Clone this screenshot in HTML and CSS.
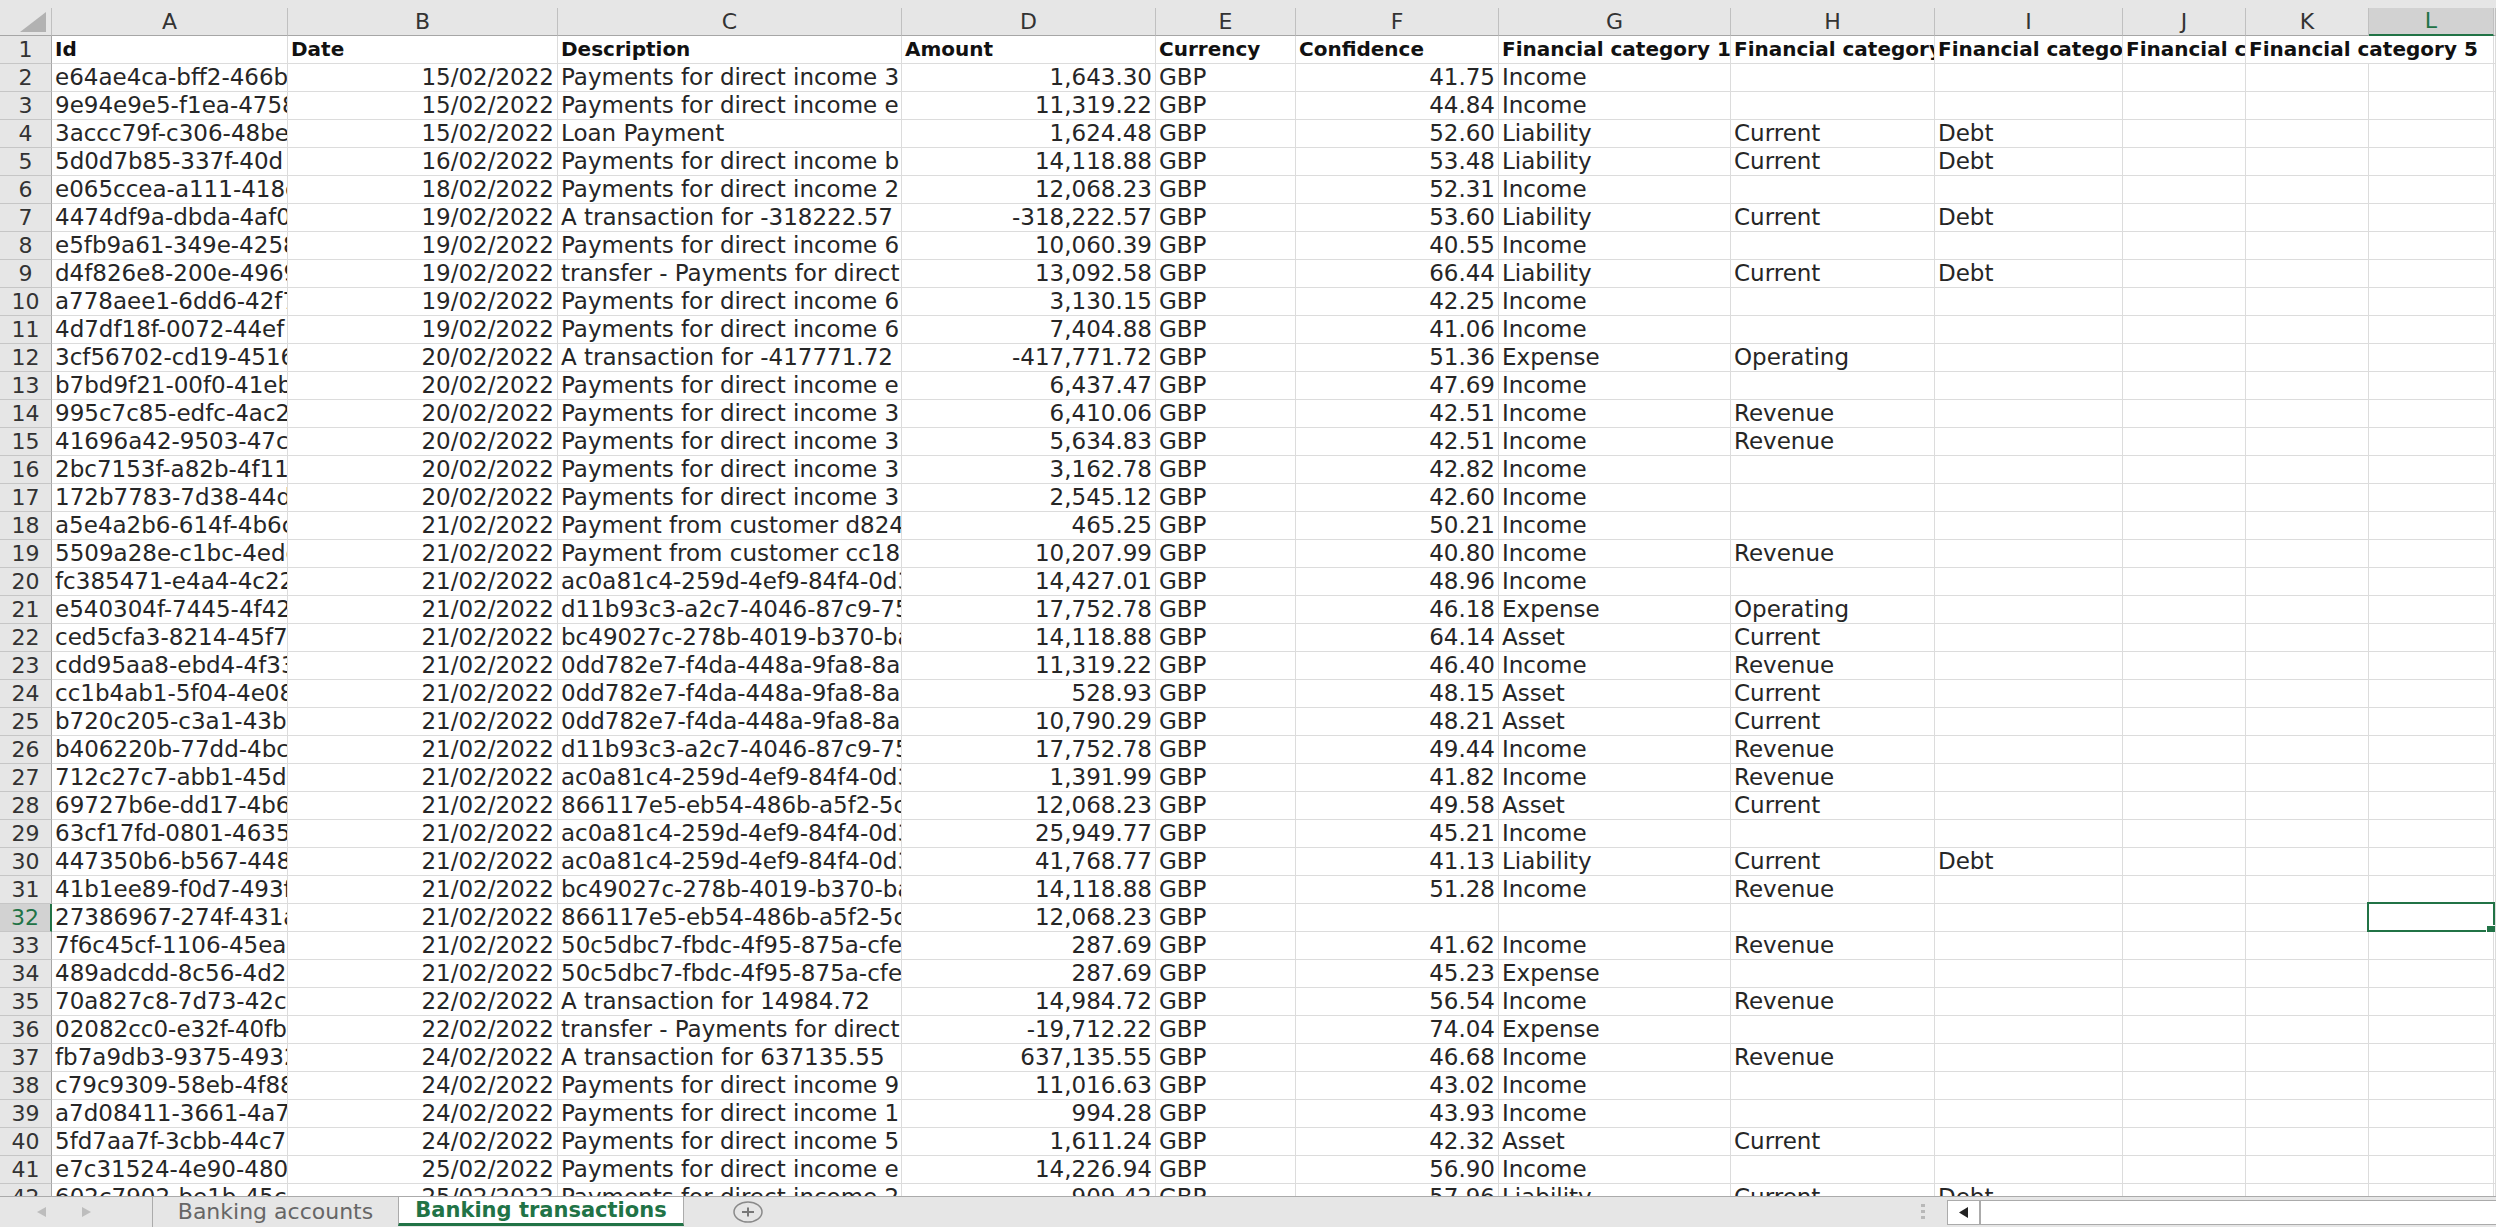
FILE: index.html
```html
<!DOCTYPE html>
<html lang="en">
<head>
<meta charset="utf-8">
<title>Banking transactions</title>
<link rel="stylesheet" href="styles.css">
</head>
<body>
<main class="sheet">
<table class="grid">
<colgroup><col class="w-head"><col class="w-a"><col class="w-b"><col class="w-c"><col class="w-d"><col class="w-e"><col class="w-f"><col class="w-g"><col class="w-h"><col class="w-i"><col class="w-j"><col class="w-k"><col class="w-l"><col></colgroup>
<thead>
<tr><th class="corner"><svg class="corner-mark" viewBox="0 0 26 20" aria-hidden="true"><path d="M26 0V20H0Z" fill="#b2b2b2"/></svg></th><th scope="col">A</th><th scope="col">B</th><th scope="col">C</th><th scope="col">D</th><th scope="col">E</th><th scope="col">F</th><th scope="col">G</th><th scope="col">H</th><th scope="col">I</th><th scope="col">J</th><th scope="col">K</th><th scope="col" class="current">L</th><th></th></tr>
</thead>
<tbody>
<tr class="titles"><th scope="row">1</th><td>Id</td><td>Date</td><td>Description</td><td>Amount</td><td>Currency</td><td>Confidence</td><td>Financial category 1</td><td>Financial category 2</td><td>Financial category 3</td><td>Financial category 4</td><td colspan="2">Financial category 5</td><td></td></tr>
<tr><th scope="row">2</th><td>e64ae4ca-bff2-466b</td><td>15/02/2022</td><td>Payments for direct income 3</td><td>1,643.30</td><td>GBP</td><td>41.75</td><td>Income</td><td></td><td></td><td></td><td></td><td></td><td></td></tr>
<tr><th scope="row">3</th><td>9e94e9e5-f1ea-4758</td><td>15/02/2022</td><td>Payments for direct income e</td><td>11,319.22</td><td>GBP</td><td>44.84</td><td>Income</td><td></td><td></td><td></td><td></td><td></td><td></td></tr>
<tr><th scope="row">4</th><td>3accc79f-c306-48be-</td><td>15/02/2022</td><td>Loan Payment</td><td>1,624.48</td><td>GBP</td><td>52.60</td><td>Liability</td><td>Current</td><td>Debt</td><td></td><td></td><td></td><td></td></tr>
<tr><th scope="row">5</th><td>5d0d7b85-337f-40d</td><td>16/02/2022</td><td>Payments for direct income b</td><td>14,118.88</td><td>GBP</td><td>53.48</td><td>Liability</td><td>Current</td><td>Debt</td><td></td><td></td><td></td><td></td></tr>
<tr><th scope="row">6</th><td>e065ccea-a111-418c</td><td>18/02/2022</td><td>Payments for direct income 2</td><td>12,068.23</td><td>GBP</td><td>52.31</td><td>Income</td><td></td><td></td><td></td><td></td><td></td><td></td></tr>
<tr><th scope="row">7</th><td>4474df9a-dbda-4af0</td><td>19/02/2022</td><td>A transaction for -318222.57</td><td>-318,222.57</td><td>GBP</td><td>53.60</td><td>Liability</td><td>Current</td><td>Debt</td><td></td><td></td><td></td><td></td></tr>
<tr><th scope="row">8</th><td>e5fb9a61-349e-4258</td><td>19/02/2022</td><td>Payments for direct income 6</td><td>10,060.39</td><td>GBP</td><td>40.55</td><td>Income</td><td></td><td></td><td></td><td></td><td></td><td></td></tr>
<tr><th scope="row">9</th><td>d4f826e8-200e-4969</td><td>19/02/2022</td><td>transfer - Payments for direct</td><td>13,092.58</td><td>GBP</td><td>66.44</td><td>Liability</td><td>Current</td><td>Debt</td><td></td><td></td><td></td><td></td></tr>
<tr><th scope="row">10</th><td>a778aee1-6dd6-42f7</td><td>19/02/2022</td><td>Payments for direct income 6</td><td>3,130.15</td><td>GBP</td><td>42.25</td><td>Income</td><td></td><td></td><td></td><td></td><td></td><td></td></tr>
<tr><th scope="row">11</th><td>4d7df18f-0072-44ef</td><td>19/02/2022</td><td>Payments for direct income 6</td><td>7,404.88</td><td>GBP</td><td>41.06</td><td>Income</td><td></td><td></td><td></td><td></td><td></td><td></td></tr>
<tr><th scope="row">12</th><td>3cf56702-cd19-4516</td><td>20/02/2022</td><td>A transaction for -417771.72</td><td>-417,771.72</td><td>GBP</td><td>51.36</td><td>Expense</td><td>Operating</td><td></td><td></td><td></td><td></td><td></td></tr>
<tr><th scope="row">13</th><td>b7bd9f21-00f0-41eb</td><td>20/02/2022</td><td>Payments for direct income e</td><td>6,437.47</td><td>GBP</td><td>47.69</td><td>Income</td><td></td><td></td><td></td><td></td><td></td><td></td></tr>
<tr><th scope="row">14</th><td>995c7c85-edfc-4ac2-</td><td>20/02/2022</td><td>Payments for direct income 3</td><td>6,410.06</td><td>GBP</td><td>42.51</td><td>Income</td><td>Revenue</td><td></td><td></td><td></td><td></td><td></td></tr>
<tr><th scope="row">15</th><td>41696a42-9503-47c7</td><td>20/02/2022</td><td>Payments for direct income 3</td><td>5,634.83</td><td>GBP</td><td>42.51</td><td>Income</td><td>Revenue</td><td></td><td></td><td></td><td></td><td></td></tr>
<tr><th scope="row">16</th><td>2bc7153f-a82b-4f11</td><td>20/02/2022</td><td>Payments for direct income 3</td><td>3,162.78</td><td>GBP</td><td>42.82</td><td>Income</td><td></td><td></td><td></td><td></td><td></td><td></td></tr>
<tr><th scope="row">17</th><td>172b7783-7d38-44d</td><td>20/02/2022</td><td>Payments for direct income 3</td><td>2,545.12</td><td>GBP</td><td>42.60</td><td>Income</td><td></td><td></td><td></td><td></td><td></td><td></td></tr>
<tr><th scope="row">18</th><td>a5e4a2b6-614f-4b6c</td><td>21/02/2022</td><td>Payment from customer d824</td><td>465.25</td><td>GBP</td><td>50.21</td><td>Income</td><td></td><td></td><td></td><td></td><td></td><td></td></tr>
<tr><th scope="row">19</th><td>5509a28e-c1bc-4edc</td><td>21/02/2022</td><td>Payment from customer cc18</td><td>10,207.99</td><td>GBP</td><td>40.80</td><td>Income</td><td>Revenue</td><td></td><td></td><td></td><td></td><td></td></tr>
<tr><th scope="row">20</th><td>fc385471-e4a4-4c22</td><td>21/02/2022</td><td>ac0a81c4-259d-4ef9-84f4-0d3</td><td>14,427.01</td><td>GBP</td><td>48.96</td><td>Income</td><td></td><td></td><td></td><td></td><td></td><td></td></tr>
<tr><th scope="row">21</th><td>e540304f-7445-4f42</td><td>21/02/2022</td><td>d11b93c3-a2c7-4046-87c9-75</td><td>17,752.78</td><td>GBP</td><td>46.18</td><td>Expense</td><td>Operating</td><td></td><td></td><td></td><td></td><td></td></tr>
<tr><th scope="row">22</th><td>ced5cfa3-8214-45f7</td><td>21/02/2022</td><td>bc49027c-278b-4019-b370-ba</td><td>14,118.88</td><td>GBP</td><td>64.14</td><td>Asset</td><td>Current</td><td></td><td></td><td></td><td></td><td></td></tr>
<tr><th scope="row">23</th><td>cdd95aa8-ebd4-4f33</td><td>21/02/2022</td><td>0dd782e7-f4da-448a-9fa8-8a</td><td>11,319.22</td><td>GBP</td><td>46.40</td><td>Income</td><td>Revenue</td><td></td><td></td><td></td><td></td><td></td></tr>
<tr><th scope="row">24</th><td>cc1b4ab1-5f04-4e08</td><td>21/02/2022</td><td>0dd782e7-f4da-448a-9fa8-8a</td><td>528.93</td><td>GBP</td><td>48.15</td><td>Asset</td><td>Current</td><td></td><td></td><td></td><td></td><td></td></tr>
<tr><th scope="row">25</th><td>b720c205-c3a1-43b4</td><td>21/02/2022</td><td>0dd782e7-f4da-448a-9fa8-8a</td><td>10,790.29</td><td>GBP</td><td>48.21</td><td>Asset</td><td>Current</td><td></td><td></td><td></td><td></td><td></td></tr>
<tr><th scope="row">26</th><td>b406220b-77dd-4bc</td><td>21/02/2022</td><td>d11b93c3-a2c7-4046-87c9-75</td><td>17,752.78</td><td>GBP</td><td>49.44</td><td>Income</td><td>Revenue</td><td></td><td></td><td></td><td></td><td></td></tr>
<tr><th scope="row">27</th><td>712c27c7-abb1-45dc</td><td>21/02/2022</td><td>ac0a81c4-259d-4ef9-84f4-0d3</td><td>1,391.99</td><td>GBP</td><td>41.82</td><td>Income</td><td>Revenue</td><td></td><td></td><td></td><td></td><td></td></tr>
<tr><th scope="row">28</th><td>69727b6e-dd17-4b6</td><td>21/02/2022</td><td>866117e5-eb54-486b-a5f2-5c</td><td>12,068.23</td><td>GBP</td><td>49.58</td><td>Asset</td><td>Current</td><td></td><td></td><td></td><td></td><td></td></tr>
<tr><th scope="row">29</th><td>63cf17fd-0801-4635</td><td>21/02/2022</td><td>ac0a81c4-259d-4ef9-84f4-0d3</td><td>25,949.77</td><td>GBP</td><td>45.21</td><td>Income</td><td></td><td></td><td></td><td></td><td></td><td></td></tr>
<tr><th scope="row">30</th><td>447350b6-b567-448</td><td>21/02/2022</td><td>ac0a81c4-259d-4ef9-84f4-0d3</td><td>41,768.77</td><td>GBP</td><td>41.13</td><td>Liability</td><td>Current</td><td>Debt</td><td></td><td></td><td></td><td></td></tr>
<tr><th scope="row">31</th><td>41b1ee89-f0d7-493f</td><td>21/02/2022</td><td>bc49027c-278b-4019-b370-ba</td><td>14,118.88</td><td>GBP</td><td>51.28</td><td>Income</td><td>Revenue</td><td></td><td></td><td></td><td></td><td></td></tr>
<tr><th scope="row" class="current">32</th><td>27386967-274f-431a</td><td>21/02/2022</td><td>866117e5-eb54-486b-a5f2-5c</td><td>12,068.23</td><td>GBP</td><td></td><td></td><td></td><td></td><td></td><td></td><td class="selected"><span class="outline"></span></td><td></td></tr>
<tr><th scope="row">33</th><td>7f6c45cf-1106-45ea-</td><td>21/02/2022</td><td>50c5dbc7-fbdc-4f95-875a-cfe</td><td>287.69</td><td>GBP</td><td>41.62</td><td>Income</td><td>Revenue</td><td></td><td></td><td></td><td></td><td></td></tr>
<tr><th scope="row">34</th><td>489adcdd-8c56-4d2</td><td>21/02/2022</td><td>50c5dbc7-fbdc-4f95-875a-cfe</td><td>287.69</td><td>GBP</td><td>45.23</td><td>Expense</td><td></td><td></td><td></td><td></td><td></td><td></td></tr>
<tr><th scope="row">35</th><td>70a827c8-7d73-42c3</td><td>22/02/2022</td><td>A transaction for 14984.72</td><td>14,984.72</td><td>GBP</td><td>56.54</td><td>Income</td><td>Revenue</td><td></td><td></td><td></td><td></td><td></td></tr>
<tr><th scope="row">36</th><td>02082cc0-e32f-40fb</td><td>22/02/2022</td><td>transfer - Payments for direct</td><td>-19,712.22</td><td>GBP</td><td>74.04</td><td>Expense</td><td></td><td></td><td></td><td></td><td></td><td></td></tr>
<tr><th scope="row">37</th><td>fb7a9db3-9375-4932</td><td>24/02/2022</td><td>A transaction for 637135.55</td><td>637,135.55</td><td>GBP</td><td>46.68</td><td>Income</td><td>Revenue</td><td></td><td></td><td></td><td></td><td></td></tr>
<tr><th scope="row">38</th><td>c79c9309-58eb-4f88</td><td>24/02/2022</td><td>Payments for direct income 9</td><td>11,016.63</td><td>GBP</td><td>43.02</td><td>Income</td><td></td><td></td><td></td><td></td><td></td><td></td></tr>
<tr><th scope="row">39</th><td>a7d08411-3661-4a7</td><td>24/02/2022</td><td>Payments for direct income 1</td><td>994.28</td><td>GBP</td><td>43.93</td><td>Income</td><td></td><td></td><td></td><td></td><td></td><td></td></tr>
<tr><th scope="row">40</th><td>5fd7aa7f-3cbb-44c7</td><td>24/02/2022</td><td>Payments for direct income 5</td><td>1,611.24</td><td>GBP</td><td>42.32</td><td>Asset</td><td>Current</td><td></td><td></td><td></td><td></td><td></td></tr>
<tr><th scope="row">41</th><td>e7c31524-4e90-4800</td><td>25/02/2022</td><td>Payments for direct income e</td><td>14,226.94</td><td>GBP</td><td>56.90</td><td>Income</td><td></td><td></td><td></td><td></td><td></td><td></td></tr>
<tr><th scope="row">42</th><td>602c7902-be1b-45cc</td><td>25/02/2022</td><td>Payments for direct income 2</td><td>909.42</td><td>GBP</td><td>57.96</td><td>Liability</td><td>Current</td><td>Debt</td><td></td><td></td><td></td><td></td></tr>
</tbody>
</table>
</main>
<footer class="bar">
<div class="arrows">
<button class="arrow" type="button" aria-label="Previous sheet"><svg width="9" height="10" viewBox="0 0 9 10"><path d="M9 0V10L0 5Z" fill="#bdbdbd"/></svg></button>
<button class="arrow" type="button" aria-label="Next sheet"><svg width="9" height="10" viewBox="0 0 9 10"><path d="M0 0V10L9 5Z" fill="#bdbdbd"/></svg></button>
</div>
<nav class="tabs">
<button class="tab" type="button">Banking accounts</button>
<button class="tab active" type="button">Banking transactions</button>
</nav>
<button class="add" type="button" aria-label="New sheet"><svg width="30" height="22" viewBox="0 0 30 22"><ellipse cx="15" cy="11" rx="14" ry="10" fill="none" stroke="#8a8a8a" stroke-width="1.5"/><path d="M9 11H21M15 6.500V15.500" stroke="#777" stroke-width="2"/></svg></button>
<svg class="grip" width="4" height="16" viewBox="0 0 4 16" aria-hidden="true"><path d="M0 0h4v3H0zM0 6h4v3H0zM0 12h4v3H0z" fill="#b8b8b8"/></svg>
<div class="scroll">
<button class="scroll-left" type="button" aria-label="Scroll left"><svg width="9" height="11" viewBox="0 0 9 11"><path d="M9 0V11L0 5.500Z" fill="#222"/></svg></button>
<div class="thumb"></div>
</div>
</footer>
</body>
</html>
```
FILE: styles.css
```css
* { box-sizing: border-box; }

body {
  margin: 0;
  height: 100vh;
  display: flex;
  flex-direction: column;
  background: #e6e6e6;
  color: #262626;
  font-family: "DejaVu Sans", Verdana, sans-serif;
  font-size: 23px;
}

button {
  border: 0;
  padding: 0;
  background: none;
  color: inherit;
  font: inherit;
}

.sheet {
  flex: 1;
  min-height: 0;
  padding-top: 8px;
  overflow: hidden;
}

/* Grid */
.grid {
  width: 100%;
  table-layout: fixed;
  border-collapse: separate;
  border-spacing: 0;
  background: #fff;
}

.w-head { width: 52px; }
.w-a { width: 236px; }
.w-b { width: 270px; }
.w-c { width: 344px; }
.w-d { width: 254px; }
.w-e { width: 140px; }
.w-f { width: 203px; }
.w-g { width: 232px; }
.w-h { width: 204px; }
.w-i { width: 188px; }
.w-j, .w-k { width: 123px; }
.w-l { width: 125px; }

.grid th,
.grid td {
  height: 28px;
  padding: 0 3px;
  border-right: 1px solid #dcdcdc;
  border-bottom: 1px solid #dcdcdc;
  line-height: 27px;
  text-align: left;
  white-space: nowrap;
  overflow: hidden;
}

.grid td:nth-child(3),
.grid td:nth-child(5),
.grid td:nth-child(7) { text-align: right; }

.grid .titles td {
  font-size: 20px;
  font-weight: bold;
  text-align: left;
  color: #111;
}

.grid th {
  padding: 0;
  background: #e6e6e6;
  border-right-color: #a6a6a6;
  border-bottom-color: #c6c6c6;
  font-size: 22px;
  font-weight: normal;
  text-align: center;
  color: #333;
}

.grid thead th {
  border-right-color: #c0c0c0;
  border-bottom-color: #a6a6a6;
}

.grid .corner { padding: 3px 5px 3px 20px; }

.corner-mark {
  display: block;
  width: 26px;
  height: 20px;
}

.grid th.current {
  background: #d2d2d2;
  color: #217346;
}

.grid thead th.current { border-bottom: 2px solid #217346; line-height: 26px; }
.grid tbody th.current { border-right: 2px solid #217346; }

.grid td.selected {
  position: relative;
  overflow: visible;
}

.outline {
  position: absolute;
  inset: -2px -2px -1px -2px;
  border: 2px solid #217346;
}

.outline::after {
  content: "";
  position: absolute;
  right: -2px;
  bottom: -2px;
  width: 8px;
  height: 6px;
  background: #217346;
  border-top: 1px solid #fff;
  border-left: 1px solid #fff;
}

/* Sheet tabs and scroll bar */
.bar {
  height: 31px;
  display: flex;
  align-items: center;
  border-top: 1px solid #ababab;
  background: #e6e6e6;
  color: #666;
  font-size: 22px;
}

.arrows {
  width: 152px;
  padding-left: 37px;
  display: flex;
  gap: 36px;
}

.arrow,
.add,
.scroll-left {
  display: flex;
  align-items: center;
  justify-content: center;
}

.tabs {
  align-self: stretch;
  display: flex;
  padding-bottom: 1px;
  border-left: 1px solid #ababab;
}

.tab {
  width: 245px;
  line-height: 27px;
  white-space: nowrap;
}

.tab.active {
  width: 286px;
  background: #fff;
  border: solid #ababab;
  border-width: 0 1px;
  border-bottom: 3px solid #217346;
  color: #217346;
  font-size: 21px;
  font-weight: bold;
}

.add { margin-left: 49px; }

.grip { margin-left: auto; }

.scroll {
  width: 22%;
  height: 25px;
  margin-left: 22px;
  display: flex;
  background: #fff;
  border: 1px solid #ababab;
  border-right: 0;
}

.scroll-left {
  width: 33px;
  border-right: 2px solid #ababab;
}

.thumb {
  flex: 1;
  background: #fff;
}
```
